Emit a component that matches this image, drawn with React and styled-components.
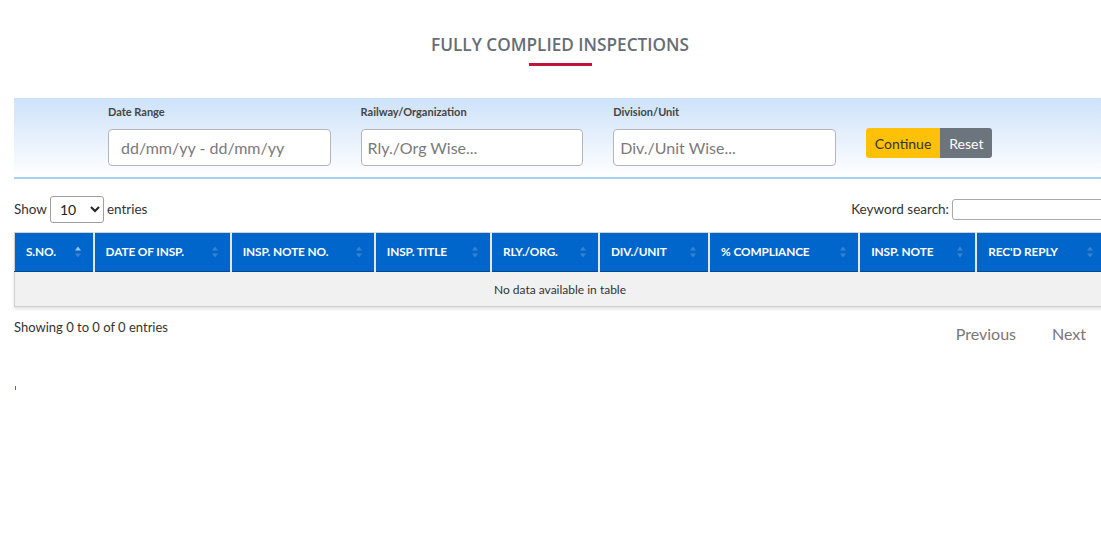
import React from "react";
import styled, { createGlobalStyle } from "styled-components";

const Global = createGlobalStyle`
  html, body { margin: 0; padding: 0; background: #fff; overflow-x: hidden; }
  body { font-family: Lato, "Liberation Sans", sans-serif; color: #333; }
  * { box-sizing: border-box; }
`;

const Page = styled.div`
  margin-left: 14px;
  width: 1092px;
`;

const TitleBlock = styled.div`
  display: flex;
  flex-direction: column;
  align-items: center;
  padding-top: 33px;
`;

const Title = styled.h2`
  margin: 0;
  font-family: "Open Sans", "Liberation Sans", sans-serif;
  font-size: 17.2px;
  font-weight: 600;
  line-height: 24px;
  color: #676d75;
`;

const Underline = styled.div`
  width: 63px;
  height: 3px;
  background: #c0143c;
  margin-top: 6px;
`;

const FilterBar = styled.div`
  margin-top: 32px;
  background: linear-gradient(to bottom, #cde2fa 0%, #ffffff 100%);
  border-bottom: 2px solid #a9d2f0;
  padding: 7px 0 11px 94px;
  display: flex;
  gap: 30px;
  align-items: flex-start;
`;

const Field = styled.div`
  width: 222.6px;
  display: flex;
  flex-direction: column;
`;

const Label = styled.label`
  font-size: 11px;
  font-weight: 700;
  line-height: 14px;
  color: #444;
  margin-bottom: 10px;
`;

const Input = styled.input`
  height: 37px;
  width: 100%;
  border: 1px solid #b5b5b5;
  border-radius: 4px;
  background: #fff;
  font-family: Lato, "Liberation Sans", sans-serif;
  font-size: 16px;
  padding: 0 0 0 ${(p) => p.$pad}px;
  color: #333;
  &::placeholder { color: #7a7a7a; }
`;

const ButtonGroup = styled.div`
  display: flex;
  margin-top: 23px;
`;

const Btn = styled.button`
  height: 30px;
  border: none;
  font-family: Lato, "Liberation Sans", sans-serif;
  font-size: 14px;
  padding: 0 ${(p) => p.$px}px;
  background: ${(p) => p.$bg};
  color: ${(p) => p.$fg};
  &:first-child { border-radius: 3px 0 0 3px; }
  &:last-child { border-radius: 0 3px 3px 0; }
`;

const Controls = styled.div`
  display: flex;
  justify-content: space-between;
  align-items: center;
  margin-top: 16px;
  height: 28px;
`;

const Inline = styled.label`
  display: flex;
  align-items: center;
  font-size: 13.5px;
  color: #333;
  gap: ${(p) => p.$gap}px;
`;

const Select = styled.select`
  width: 54px;
  height: 27px;
  border: 1px solid #a0a0a0;
  border-radius: 3px;
  background: #fff;
  font-family: Lato, "Liberation Sans", sans-serif;
  font-size: 14px;
  padding-left: 5px;
  color: #222;
`;

const SearchInput = styled.input`
  width: 154px;
  height: 21px;
  border: 1px solid #a8a8a8;
  border-radius: 3px;
`;

const Table = styled.table`
  margin-top: 9px;
  width: 1092px;
  border-collapse: collapse;
  border: 1px solid #d0d0d0;
  box-shadow: 0 2px 3px rgba(0, 0, 0, 0.12);
  table-layout: fixed;
`;

const Th = styled.th`
  position: relative;
  background: #0066cc;
  color: #fff;
  height: 39px;
  font-size: 11.8px;
  font-weight: 700;
  text-align: left;
  padding: 0 0 1px 11px;
  border-right: 2px solid #e6e6e6;
  border-bottom: 1px solid #004a94;
  text-transform: uppercase;
  white-space: nowrap;
  letter-spacing: -0.1px;
  &:last-child { border-right: none; }
`;

const SortIcon = styled.span`
  position: absolute;
  right: 12px;
  top: 50%;
  transform: translateY(-50%);
  display: flex;
  flex-direction: column;
  gap: 3px;
`;

const Arrow = styled.span`
  width: 0;
  height: 0;
  border-left: 3px solid transparent;
  border-right: 3px solid transparent;
  ${(p) => (p.$up ? "border-bottom" : "border-top")}: 4px solid ${(p) => (p.$on ? "#9cc4ee" : "#3b82cf")};
`;

const Td = styled.td`
  background: #f1f1f1;
  height: 35px;
  font-size: 12px;
  text-align: center;
  color: #333;
`;

const Footer = styled.div`
  display: flex;
  justify-content: space-between;
  align-items: flex-start;
  margin-top: 12px;
`;

const Info = styled.div`
  font-size: 13px;
  color: #333;
`;

const Pager = styled.div`
  display: flex;
  margin-top: 5px;
  padding-right: 2px;
`;

const PageBtn = styled.span`
  font-size: 16px;
  color: #777;
  padding: 0 18px;
`;

const Dot = styled.div`
  width: 1px;
  height: 4px;
  background: #1f78d1;
  margin: 43px 0 0 1px;
`;

const columns = [
  ["S.No.", 79, true],
  ["Date of Insp.", 137],
  ["Insp. Note No.", 144],
  ["Insp. Title", 116],
  ["Rly./Org.", 108],
  ["Div./Unit", 110],
  ["% Compliance", 150],
  ["Insp. Note", 117],
  ["Rec'd Reply", 129],
];

export default function App() {
  return (
    <>
      <Global />
      <Page>
        <TitleBlock>
          <Title>FULLY COMPLIED INSPECTIONS</Title>
          <Underline />
        </TitleBlock>

        <FilterBar>
          <Field>
            <Label>Date Range</Label>
            <Input $pad={12} placeholder="dd/mm/yy - dd/mm/yy" />
          </Field>
          <Field>
            <Label>Railway/Organization</Label>
            <Input $pad={6} placeholder="Rly./Org Wise..." />
          </Field>
          <Field>
            <Label>Division/Unit</Label>
            <Input $pad={6} placeholder="Div./Unit Wise..." />
          </Field>
          <ButtonGroup>
            <Btn $bg="#ffc107" $fg="#333" $px={9}>Continue</Btn>
            <Btn $bg="#6c757d" $fg="#fff" $px={9}>Reset</Btn>
          </ButtonGroup>
        </FilterBar>

        <Controls>
          <Inline $gap={3}>
            Show
            <Select defaultValue="10">
              <option>10</option>
              <option>25</option>
              <option>50</option>
              <option>100</option>
            </Select>
            entries
          </Inline>
          <Inline $gap={3}>
            Keyword search:
            <SearchInput />
          </Inline>
        </Controls>

        <Table>
          <colgroup>
            {columns.map(([n, w]) => (
              <col key={n} style={{ width: w }} />
            ))}
          </colgroup>
          <thead>
            <tr>
              {columns.map(([n, , active]) => (
                <Th key={n}>
                  {n}
                  <SortIcon>
                    <Arrow $up $on={active} />
                    <Arrow />
                  </SortIcon>
                </Th>
              ))}
            </tr>
          </thead>
          <tbody>
            <tr>
              <Td colSpan={9}>No data available in table</Td>
            </tr>
          </tbody>
        </Table>

        <Footer>
          <Info>Showing 0 to 0 of 0 entries</Info>
          <Pager>
            <PageBtn>Previous</PageBtn>
            <PageBtn>Next</PageBtn>
          </Pager>
        </Footer>
        <Dot />
      </Page>
    </>
  );
}
